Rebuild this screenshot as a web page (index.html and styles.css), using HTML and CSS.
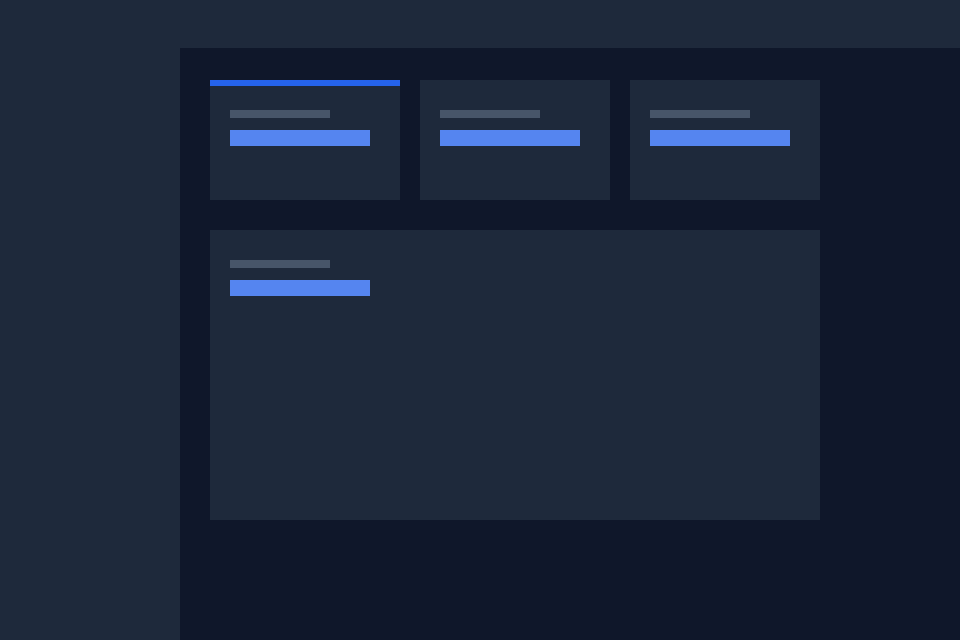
FILE: index.html
```html
<!DOCTYPE html>
<html>
<head>
<meta charset="utf-8">
<link rel="stylesheet" href="styles.css">
</head>
<body>
<div class="app">
  <header class="topbar"></header>
  <div class="body">
    <aside class="sidebar"></aside>
    <main class="main">
      <div class="stats">
        <div class="card card-active"><div class="label"></div><div class="value"></div></div>
        <div class="card"><div class="label"></div><div class="value"></div></div>
        <div class="card"><div class="label"></div><div class="value"></div></div>
      </div>
      <div class="panel"><div class="label"></div><div class="value"></div></div>
    </main>
  </div>
</div>
</body>
</html>
```
FILE: styles.css
```css
* { box-sizing: border-box; }
html, body { margin: 0; padding: 0; width: 960px; height: 640px; overflow: hidden; font-family: "Liberation Sans", sans-serif; }
.app { display: flex; flex-direction: column; width: 960px; height: 640px; background: #1e293b; }
.topbar { height: 48px; flex: none; background: #1e293b; }
.body { display: flex; flex: 1; }
.sidebar { width: 180px; flex: none; background: #1e293b; }
.main { flex: 1; background: #0f172a; padding: 32px 30px; display: flex; flex-direction: column; gap: 30px; }
.stats { display: flex; gap: 20px; }
.card { width: 190px; height: 120px; background: #1e293b; padding: 30px 20px 0; display: flex; flex-direction: column; gap: 12px; }
.card-active { border-top: 6px solid #2563eb; padding-top: 24px; }
.panel { width: 610px; height: 290px; background: #1e293b; padding: 30px 20px 0; display: flex; flex-direction: column; gap: 12px; }
.label { width: 100px; height: 8px; background: #475569; }
.value { width: 140px; height: 16px; background: #5585f0; }
```
